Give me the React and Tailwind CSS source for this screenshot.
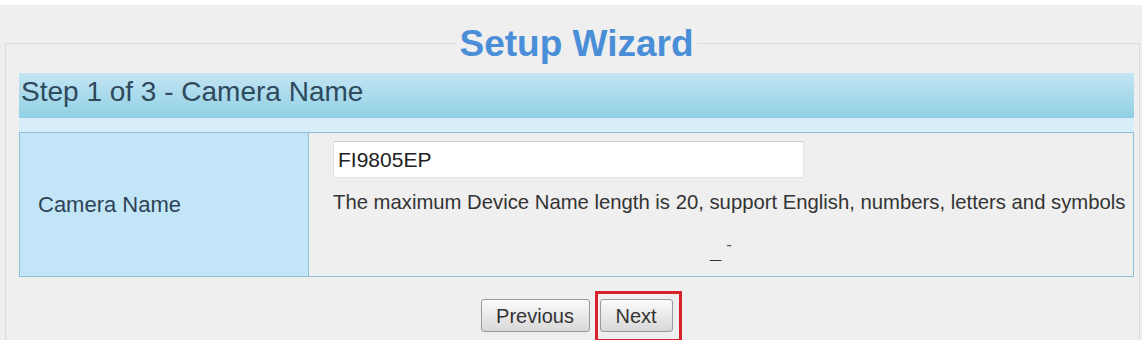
export default function App() {
  return (
    <div className="h-[340px] w-[1145px] overflow-hidden bg-white pt-[5px] pr-[3px] font-['Liberation_Sans',Arial,sans-serif]">
      <div className="h-full bg-[#efefef] pt-[17px]">
        <fieldset className="ml-[5px] mr-[2px] border border-b-0 border-[#dcdcdc] pl-[13px] pr-[5px] pt-[9px] pb-[40px]">
          <legend className="mx-auto px-[3px] pt-[2px] text-[37px] font-bold leading-[40px] text-[#4a8ed8]">
            Setup Wizard
          </legend>

          <div className="h-[45px] bg-linear-to-b from-[#c4e5f4] to-[#8fd0e4] pl-[2px] text-[28px] leading-[37px] text-[#2e4a5c]">
            Step 1 of 3 - Camera Name
          </div>
          <div className="h-[14px] bg-[#d8eff9]" />

          <div className="flex border border-[#8dbfd6]">
            <div className="flex w-[289px] shrink-0 items-center border-r border-[#93bfd3] bg-[#c3e5f8] pl-[18px] text-[22px] text-[#2d4356]">
              Camera Name
            </div>
            <div className="flex flex-1 flex-col bg-[#efefef] pt-[8px] pb-[13px]">
              <input
                readOnly
                defaultValue="FI9805EP"
                className="ml-[24px] h-[37px] w-[471px] border border-[#e2e2e2] border-t-[#cccccc] bg-white pl-[4px] text-[21px] text-[#222] outline-none"
              />
              <p className="mt-[12px] pl-[24px] text-[20.3px] leading-[24px] text-[#333]">
                The maximum Device Name length is 20, support English, numbers, letters and symbols
              </p>
              <div className="mt-[25px] flex h-[24px] items-baseline justify-center text-[20px] leading-[24px] text-[#333]">
                <span className="font-bold">_</span>
                <span className="relative -top-[8px] ml-[5px] text-[17px] text-[#555]">-</span>
              </div>
            </div>
          </div>

          <div className="mt-[22px] flex justify-center gap-[10px]">
            <button className="h-[33px] w-[109px] rounded-[3px] border border-[#9a9a9a] bg-linear-to-b from-[#fbfbfb] to-[#d8d8d8] text-[20px] text-[#333]">
              Previous
            </button>
            <div className="relative">
              <button className="h-[33px] w-[73px] rounded-[3px] border border-[#9a9a9a] bg-linear-to-b from-[#fbfbfb] to-[#d8d8d8] text-[20px] text-[#333]">
                Next
              </button>
              <div className="pointer-events-none absolute -top-[8px] -right-[9px] -bottom-[10px] -left-[5px] border-[3px] border-[#d7222b]" />
            </div>
          </div>
        </fieldset>
      </div>
    </div>
  );
}
